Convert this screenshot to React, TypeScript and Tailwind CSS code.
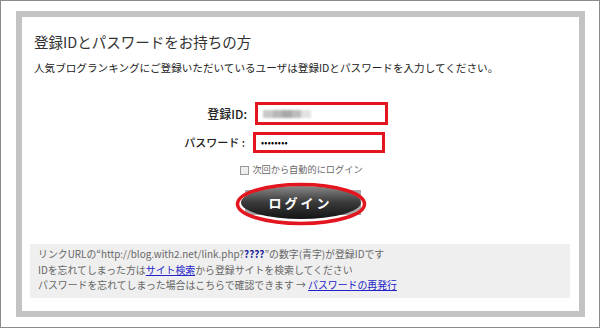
const jp = { fontFamily: '"Noto Sans CJK JP", "Noto Sans", sans-serif' }

function LoginButton() {
  return (
    <div className="relative mx-auto mt-[5px] h-[44px] w-[132px]">
      <div className="absolute left-[10px] top-[8px] h-[25px] w-[116px] bg-[#a8a8a8]" />
      <div className="absolute left-[6px] top-[4px] flex h-[33px] w-[120px] items-center justify-center rounded-[50%] bg-gradient-to-b from-[#8a8a8a] via-[#3a3a3a] to-[#151515]">
        <span className="text-[13px] font-bold tracking-[3px] text-white">ログイン</span>
      </div>
      <svg className="absolute inset-0" width="132" height="44" viewBox="0 0 132 44">
        <ellipse cx="66" cy="22" rx="63.5" ry="19.5" fill="none" stroke="#e3161f" strokeWidth="3.5" />
      </svg>
    </div>
  )
}

export default function App() {
  return (
    <div className="h-[328px] w-[600px] border border-[#8a8a8a] bg-white pl-[15px] pr-[14px] pt-[10px]" style={jp}>
      <div className="h-[306px] w-[569px] bg-[#c3c3c3] p-[6px]">
        <div className="flex h-[294px] flex-col bg-white px-[12px] pt-[15px] text-[#222]">
          <h1 className="text-[14.5px] leading-[20px] text-[#333]">登録IDとパスワードをお持ちの方</h1>
          <p className="mt-[8px] text-[10.6px] leading-[16px]">
            人気ブログランキングにご登録いただいているユーザは登録IDとパスワードを入力してください。
          </p>

          <div className="mt-[26px] flex items-center">
            <span className="w-[221px] pr-[8px] text-right text-[12px] font-medium">登録ID:</span>
            <div className="flex h-[23px] w-[133px] items-center border-[3px] border-[#e3161f] bg-white pl-[5px]">
              <div className="flex blur-[0.8px]">
                <span className="h-[8px] w-[10px] bg-[#c8c8c8]" />
                <span className="h-[8px] w-[9px] bg-[#b8b8b8]" />
                <span className="h-[8px] w-[10px] bg-[#a9a9a9]" />
                <span className="h-[8px] w-[9px] bg-[#bdbdbd]" />
                <span className="h-[8px] w-[10px] bg-[#e2e2e2]" />
              </div>
            </div>
          </div>
          <div className="mt-[7px] flex items-center">
            <span className="w-[219px] pr-[8px] text-right text-[11px] font-medium">パスワード :</span>
            <div className="flex h-[21px] w-[132px] items-center border-[3px] border-[#e3161f] bg-white pl-[5px]">
              <span className="text-[9px] tracking-[0.3px] text-black">••••••••</span>
            </div>
          </div>

          <label className="mt-[10px] flex h-[14px] items-center justify-center gap-[3px] pl-[2px] text-[9.2px] text-[#666]">
            <span className="h-[9px] w-[9px] border border-[#999] bg-[#eee]" />
            次回から自動的にログイン
          </label>

          <LoginButton />

          <div className="ml-[-4px] mr-[-3px] mt-[18px] h-[54px] bg-[#efefef] px-[8px] pt-[3px] text-[9.9px] leading-[15.5px] text-[#666]">
            <div>
              リンクURLの“http://blog.with2.net/link.php?<b className="text-[#1b1b9a]">????</b>”の数字(青字)が登録IDです
            </div>
            <div>
              IDを忘れてしまった方は<a className="text-[#2323c8] underline">サイト検索</a>から登録サイトを検索してください
            </div>
            <div>
              パスワードを忘れてしまった場合はこちらで確認できます → <a className="text-[#2323c8] underline">パスワードの再発行</a>
            </div>
          </div>
        </div>
      </div>
    </div>
  )
}
